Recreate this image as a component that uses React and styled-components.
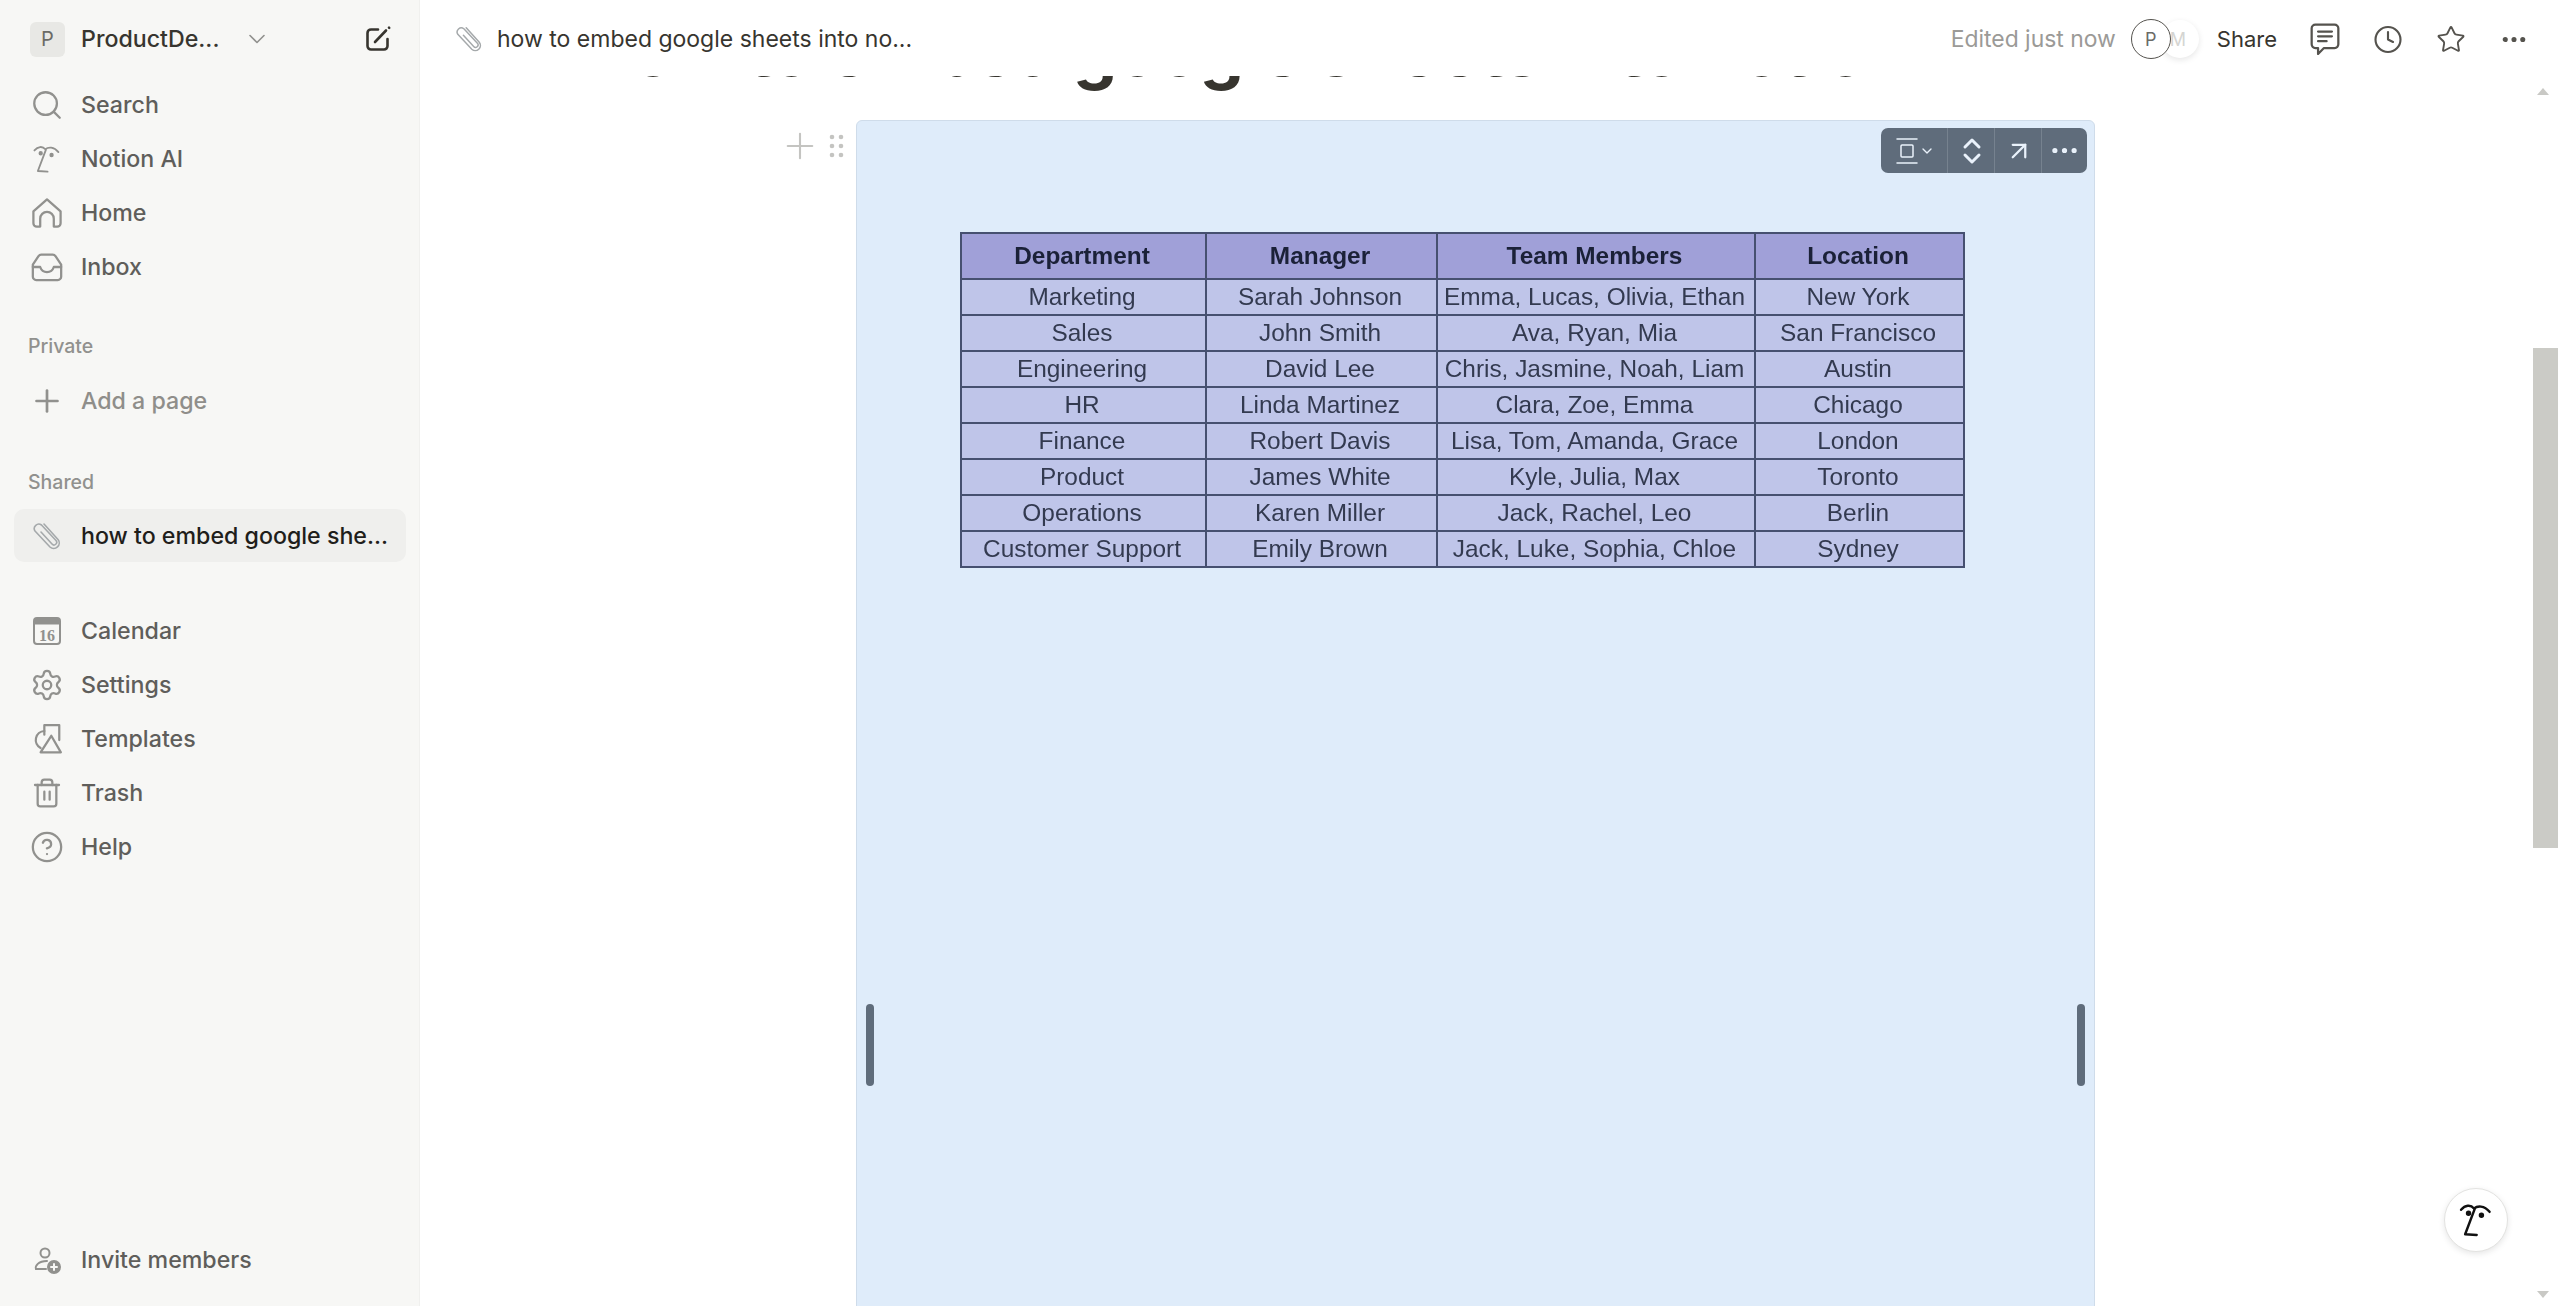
import React from 'react';
import styled, { createGlobalStyle } from 'styled-components';
import { Search, Settings, Trash2, CircleHelp, Plus, ChevronDown, Clock, Star, MoreHorizontal, ArrowUpRight } from 'lucide-react';

const GlobalStyle = createGlobalStyle`
  html, body { margin: 0; padding: 0; background: #fff; }
  body { font-family: Inter, "Noto Sans", sans-serif; overflow: hidden; }
`;

const Shell = styled.div`
  display: flex;
  width: 2561px;
  height: 1306px;
  overflow: hidden;
`;

const Sidebar = styled.aside`
  width: 420px;
  flex: none;
  display: flex;
  flex-direction: column;
  background: #f7f7f5;
  box-shadow: inset -1px 0 0 #f0f0ee;
`;

const Workspace = styled.div`
  height: 78px;
  display: flex;
  align-items: center;
  padding: 0 28px 0 30px;
  color: #37352f;
`;

const WorkspaceAvatar = styled.div`
  width: 35px;
  height: 35px;
  border-radius: 6px;
  background: #e8e8e5;
  color: #6b6b67;
  font-size: 20px;
  display: flex;
  align-items: center;
  justify-content: center;
`;

const WorkspaceName = styled.span`
  margin-left: 16px;
  font-size: 23.2px;
  font-weight: 500;
  color: #37352f;
`;

const WorkspaceChevron = styled(ChevronDown)`
  margin-left: 24px;
  color: #91918e;
`;

const ComposeSlot = styled.span`
  margin-left: auto;
  display: flex;
`;

const NavRow = styled.div`
  height: ${({ $selected }) => ($selected ? '53px' : '54px')};
  display: flex;
  align-items: center;
  margin-left: ${({ $selected }) => ($selected ? '14px' : '0')};
  width: ${({ $selected }) => ($selected ? '392px' : 'auto')};
  padding-left: ${({ $selected }) => ($selected ? '15px' : '29px')};
  border-radius: 10px;
  background: ${({ $selected }) => ($selected ? '#efefed' : 'transparent')};
  color: ${({ $selected, $muted }) => ($selected ? '#1f1e1b' : $muted ? '#8f8e8a' : '#5f5e5b')};
  font-size: 23.2px;
  font-weight: 500;
  box-sizing: border-box;
  white-space: nowrap;
`;

const NavIcon = styled.span`
  width: 36px;
  height: 36px;
  flex: none;
  margin-right: 16px;
  display: flex;
  align-items: center;
  justify-content: center;
  color: #91918e;
`;

const SectionLabel = styled.div`
  height: ${({ $h = 54 }) => $h}px;
  margin-top: ${({ $top }) => $top}px;
  padding-left: 28px;
  display: flex;
  align-items: center;
  font-size: 19.5px;
  font-weight: 500;
  color: #91918e;
`;

const NavGroup = styled.div`
  margin-top: ${({ $top = 0 }) => $top}px;
`;

const SidebarFooter = styled.div`
  margin-top: auto;
  padding-bottom: 19px;
`;

const Main = styled.main`
  flex: 1;
  min-width: 0;
  display: flex;
  flex-direction: column;
`;

const TopBar = styled.header`
  height: 76px;
  flex: none;
  box-sizing: border-box;
  display: flex;
  align-items: center;
  padding: 2px 32px 0 35px;
  background: #fff;
`;

const Breadcrumb = styled.div`
  display: flex;
  align-items: center;
  gap: 14px;
  font-size: 23px;
  color: #37352f;
  white-space: nowrap;
`;

const TopActions = styled.div`
  margin-left: auto;
  display: flex;
  align-items: center;
`;

const Edited = styled.span`
  font-size: 22.9px;
  color: #9b9a97;
  margin-right: 15px;
`;

const Avatar = styled.div`
  border-radius: 50%;
  background: #fff;
  display: flex;
  align-items: center;
  justify-content: center;
  box-sizing: border-box;
`;

const OwnerAvatar = styled(Avatar)`
  width: 40px;
  height: 40px;
  border: 1px solid #55534e;
  color: #6b6b67;
  font-size: 18px;
  position: relative;
  z-index: 1;
`;

const GuestAvatar = styled(Avatar)`
  width: 38px;
  height: 38px;
  margin-left: -10px;
  color: #d5d5d2;
  font-size: 18px;
  justify-content: flex-start;
  padding-left: 9px;
  box-shadow: 0 2px 6px rgba(0, 0, 0, 0.1);
`;

const ShareLabel = styled.span`
  margin-left: 18px;
  margin-right: 33px;
  font-size: 22px;
  color: #37352f;
`;

const TopIcons = styled.div`
  display: flex;
  align-items: center;
  gap: 33px;
  color: #55534e;
`;

const TopIconBox = styled.span`
  width: 30px;
  height: 30px;
  display: flex;
  align-items: center;
  justify-content: center;
`;

const Body = styled.div`
  flex: 1;
  min-height: 0;
  display: flex;
`;

const Page = styled.div`
  flex: 1;
  min-width: 0;
  overflow: hidden;
`;

const TitleClip = styled.div`
  height: 44px;
  overflow: hidden;
`;

const PageTitle = styled.h1`
  margin: -67px 0 0 169px;
  font-size: 70px;
  line-height: 84px;
  font-weight: 700;
  letter-spacing: -1.1px;
  color: #37352f;
  white-space: nowrap;
`;

const BlockRow = styled.div`
  display: flex;
  align-items: flex-start;
  padding-left: 357px;
`;

const BlockHandle = styled.div`
  width: 79px;
  height: 47px;
  flex: none;
  box-sizing: border-box;
  padding: 5px 0 0 2px;
  display: flex;
  align-items: center;
  gap: 8px;
  color: #c4c4c1;
`;

const EmbedFrame = styled.div`
  position: relative;
  width: 1239px;
  height: 1190px;
  flex: none;
  box-sizing: border-box;
  padding: 111px 0 0 103px;
  background: #dfecfa;
  border: 1px solid #cfdcea;
  border-radius: 6px 6px 0 0;
`;

const EmbedToolbar = styled.div`
  position: absolute;
  top: 7px;
  right: 7px;
  height: 45px;
  display: flex;
  align-items: stretch;
  border-radius: 7px;
  background: #5f6c7b;
  color: #eaf2fb;
  overflow: hidden;
`;

const ToolbarCell = styled.div`
  width: ${({ $w }) => $w}px;
  display: flex;
  align-items: center;
  justify-content: center;
  box-shadow: ${({ $last }) => ($last ? 'none' : 'inset -1px 0 0 #76828f')};
`;

const ResizeHandle = styled.div`
  position: absolute;
  top: 883px;
  ${({ $side }) => $side}: 9px;
  width: 8px;
  height: 82px;
  border-radius: 4px;
  background: #5f6c7b;
`;

const SheetTable = styled.table`
  width: 1003px;
  table-layout: fixed;
  border-collapse: collapse;
  font-family: "Liberation Sans", Arial, sans-serif;
  font-size: 24.4px;
  color: #333a50;
  text-align: center;
  filter: blur(0.5px);

  th, td {
    border: 2px solid #465070;
    padding: 0 3px 0 0;
    white-space: nowrap;
  }

  th {
    height: 44px;
    background: #a0a0d8;
    color: #1b2138;
    font-weight: 700;
  }

  td {
    height: 34px;
    background: #bfc5e9;
  }
`;

const ScrollRail = styled.div`
  width: 28px;
  flex: none;
  display: flex;
  flex-direction: column;
  align-items: flex-start;
  position: relative;
`;

const ScrollThumb = styled.div`
  width: 25px;
  height: 500px;
  margin-top: 272px;
  background: #cbcbc6;
`;

const ScrollArrow = styled.div`
  position: absolute;
  left: 4px;
  ${({ $up }) => ($up ? 'top: 12px;' : 'bottom: 8px;')}
  border-left: 6.5px solid transparent;
  border-right: 6.5px solid transparent;
  ${({ $up }) => ($up ? 'border-bottom' : 'border-top')}: 7px solid #c9c9c5;
`;

const AiButton = styled.div`
  position: absolute;
  left: 2444px;
  top: 1188px;
  width: 64px;
  height: 64px;
  box-sizing: border-box;
  border-radius: 50%;
  background: #fff;
  border: 1px solid #e3e3e1;
  box-shadow: 0 2px 6px rgba(0, 0, 0, 0.1);
  display: flex;
  align-items: center;
  justify-content: center;
  color: #111;
`;

const StrokeIcon = styled.svg`
  fill: none;
  stroke: currentColor;
  stroke-width: ${({ $weight = 2 }) => $weight};
  stroke-linecap: round;
  stroke-linejoin: round;
  flex: none;
`;

const IconNumber = styled.text`
  font-family: "Liberation Serif", serif;
  font-size: 16px;
  font-weight: 700;
  fill: currentColor;
  stroke: none;
  text-anchor: middle;
`;

const ComposeIcon = () => (
  <StrokeIcon width="28" height="28" viewBox="0 0 28 28" $weight={2.6}>
    <path d="M14 4.5H7a3.5 3.5 0 0 0-3.5 3.5v13A3.5 3.5 0 0 0 7 24.5h13a3.5 3.5 0 0 0 3.5-3.5v-7" />
    <path d="M11 17l11-11.5" />
    <path d="M25 2.6l.2.2" />
  </StrokeIcon>
);

const FaceIcon = ({ size = 32, weight = 1.6 }) => (
  <StrokeIcon width={size} height={size} viewBox="0 0 28 28" $weight={weight}>
    <path d="M3 6.5C6 3 10 2.5 12.5 5.5C15 3.5 20 3 24 8" />
    <path d="M13 6L6 24.5L14.5 25" />
    <circle cx="8.5" cy="9" r="1.1" fill="currentColor" />
    <circle cx="18" cy="10.5" r="1.1" fill="currentColor" />
  </StrokeIcon>
);

const HomeIcon = () => (
  <StrokeIcon width="34" height="34" viewBox="0 0 30 30" $weight={2}>
    <path d="M3 13.5L15 3l12 10.5V24a3 3 0 0 1-3 3h-3v-7a6 6 0 0 0-12 0v7H6a3 3 0 0 1-3-3z" />
  </StrokeIcon>
);

const InboxIcon = () => (
  <StrokeIcon width="34" height="34" viewBox="0 0 30 30" $weight={2}>
    <path d="M2.5 13L7.5 5.5A3 3 0 0 1 10 4h10a3 3 0 0 1 2.5 1.5L27.5 13v10.5a3 3 0 0 1-3 3h-19a3 3 0 0 1-3-3z" />
    <path d="M2.5 15H9c1 3 3 4.5 6 4.5s5-1.5 6-4.5h6.5" />
  </StrokeIcon>
);

const CalendarIcon = () => (
  <StrokeIcon width="30" height="30" viewBox="0 0 30 30" $weight={2}>
    <rect x="2" y="2" width="26" height="26" rx="3" />
    <path d="M2 5.5h26" strokeWidth="6" strokeLinecap="butt" />
    <IconNumber x="15" y="25">16</IconNumber>
  </StrokeIcon>
);

const TemplatesIcon = () => (
  <StrokeIcon width="32" height="32" viewBox="0 0 30 30" $weight={2.1}>
    <path d="M9 23.5A8.5 8.5 0 0 1 12.5 7.5" />
    <path d="M12.5 11V2h14v14" />
    <path d="M19 12L28 27.5H9z" />
  </StrokeIcon>
);

const PaperclipIcon = ({ size = 30 }) => (
  <StrokeIcon width={size} height={size} viewBox="0 0 30 30" $weight={1.6}>
    <path d="M9 11L20 23a2.5 2.5 0 0 0 4-3.5L9.5 4a4.5 4.5 0 0 0-6.5 6L18 26a5.5 5.5 0 0 0 8-7.5L12 3" stroke="#a5a9ab" />
  </StrokeIcon>
);

const InviteIcon = () => (
  <StrokeIcon width="30" height="30" viewBox="0 0 30 30" $weight={2}>
    <circle cx="13" cy="8" r="4.5" />
    <path d="M4 24c-1-3 2-8 11-8" />
    <path d="M4 24h10" />
    <circle cx="22" cy="22" r="6" fill="currentColor" />
    <path d="M22 19v6M19 22h6" stroke="#f7f7f5" />
  </StrokeIcon>
);

const CommentIcon = () => (
  <StrokeIcon width="30" height="32" viewBox="1 1 28 30" $weight={2.1}>
    <path d="M6 2.5h18A3.5 3.5 0 0 1 27.5 6v15a3.5 3.5 0 0 1-3.5 3.5H14L8.5 30v-5.5H6A3.5 3.5 0 0 1 2.5 21V6A3.5 3.5 0 0 1 6 2.5z" />
    <path d="M8.5 9h13M8.5 13.5h13M8.5 18h8" />
  </StrokeIcon>
);

const GripIcon = () => (
  <StrokeIcon width="15" height="24" viewBox="0 0 15 24" $weight={0}>
    {[3, 12, 21].map((y) => (
      <React.Fragment key={y}>
        <circle cx="3" cy={y} r="2.3" fill="currentColor" />
        <circle cx="12" cy={y} r="2.3" fill="currentColor" />
      </React.Fragment>
    ))}
  </StrokeIcon>
);

const AlignIcon = () => (
  <StrokeIcon width="24" height="28" viewBox="0 0 24 28" $weight={1.5}>
    <path d="M2 2h20M2 26h20" />
    <rect x="6" y="8" width="12" height="12" rx="1" />
  </StrokeIcon>
);

const ResizeIcon = () => (
  <StrokeIcon width="22" height="30" viewBox="0 0 22 30" $weight={3}>
    <path d="M4 11l7-7 7 7M4 19l7 7 7-7" />
  </StrokeIcon>
);

const topNav = [
  { label: 'Search', icon: <Search size={34} strokeWidth={1.6} /> },
  { label: 'Notion AI', icon: <FaceIcon /> },
  { label: 'Home', icon: <HomeIcon /> },
  { label: 'Inbox', icon: <InboxIcon /> },
];

const bottomNav = [
  { label: 'Calendar', icon: <CalendarIcon /> },
  { label: 'Settings', icon: <Settings size={34} strokeWidth={1.6} /> },
  { label: 'Templates', icon: <TemplatesIcon /> },
  { label: 'Trash', icon: <Trash2 size={32} strokeWidth={1.7} /> },
  { label: 'Help', icon: <CircleHelp size={34} strokeWidth={1.6} /> },
];

const columns = [245, 231, 318, 209];
const headers = ['Department', 'Manager', 'Team Members', 'Location'];
const rows = [
  ['Marketing', 'Sarah Johnson', 'Emma, Lucas, Olivia, Ethan', 'New York'],
  ['Sales', 'John Smith', 'Ava, Ryan, Mia', 'San Francisco'],
  ['Engineering', 'David Lee', 'Chris, Jasmine, Noah, Liam', 'Austin'],
  ['HR', 'Linda Martinez', 'Clara, Zoe, Emma', 'Chicago'],
  ['Finance', 'Robert Davis', 'Lisa, Tom, Amanda, Grace', 'London'],
  ['Product', 'James White', 'Kyle, Julia, Max', 'Toronto'],
  ['Operations', 'Karen Miller', 'Jack, Rachel, Leo', 'Berlin'],
  ['Customer Support', 'Emily Brown', 'Jack, Luke, Sophia, Chloe', 'Sydney'],
];

const NavItem = ({ icon, label, ...rest }) => (
  <NavRow {...rest}>
    <NavIcon>{icon}</NavIcon>
    {label}
  </NavRow>
);

export default function App() {
  return (
    <Shell>
      <GlobalStyle />
      <Sidebar>
        <Workspace>
          <WorkspaceAvatar>P</WorkspaceAvatar>
          <WorkspaceName>ProductDe...</WorkspaceName>
          <WorkspaceChevron size={28} strokeWidth={1.4} />
          <ComposeSlot><ComposeIcon /></ComposeSlot>
        </Workspace>
        <NavGroup>
          {topNav.map((item) => <NavItem key={item.label} {...item} />)}
        </NavGroup>
        <SectionLabel $top={24} $h={56}>Private</SectionLabel>
        <NavItem icon={<Plus size={36} strokeWidth={1.8} />} label="Add a page" $muted />
        <SectionLabel $top={27}>Shared</SectionLabel>
        <NavItem icon={<PaperclipIcon />} label="how to embed google she..." $selected />
        <NavGroup $top={42}>
          {bottomNav.map((item) => <NavItem key={item.label} {...item} />)}
        </NavGroup>
        <SidebarFooter>
          <NavItem icon={<InviteIcon />} label="Invite members" />
        </SidebarFooter>
      </Sidebar>

      <Main>
        <TopBar>
          <Breadcrumb>
            <PaperclipIcon size={28} />
            how to embed google sheets into no...
          </Breadcrumb>
          <TopActions>
            <Edited>Edited just now</Edited>
            <OwnerAvatar>P</OwnerAvatar>
            <GuestAvatar>M</GuestAvatar>
            <ShareLabel>Share</ShareLabel>
            <TopIcons>
              <TopIconBox><CommentIcon /></TopIconBox>
              <TopIconBox><Clock size={33} strokeWidth={1.7} /></TopIconBox>
              <TopIconBox><Star size={37} strokeWidth={1.5} /></TopIconBox>
              <TopIconBox><MoreHorizontal size={41} strokeWidth={2.1} /></TopIconBox>
            </TopIcons>
          </TopActions>
        </TopBar>
        <Body>
          <Page>
            <TitleClip>
              <PageTitle>how to embed google sheets into notion</PageTitle>
            </TitleClip>
            <BlockRow>
              <BlockHandle>
                <Plus size={42} strokeWidth={1.2} />
                <GripIcon />
              </BlockHandle>
              <EmbedFrame>
                <EmbedToolbar>
                  <ToolbarCell $w={67}>
                    <AlignIcon />
                    <ChevronDown size={16} strokeWidth={2} />
                  </ToolbarCell>
                  <ToolbarCell $w={47}><ResizeIcon /></ToolbarCell>
                  <ToolbarCell $w={47}><ArrowUpRight size={30} strokeWidth={1.8} /></ToolbarCell>
                  <ToolbarCell $w={45} $last><MoreHorizontal size={33} strokeWidth={1.8} /></ToolbarCell>
                </EmbedToolbar>
                <SheetTable>
                  <colgroup>
                    {columns.map((w) => <col key={w} width={w} />)}
                  </colgroup>
                  <thead>
                    <tr>{headers.map((h) => <th key={h}>{h}</th>)}</tr>
                  </thead>
                  <tbody>
                    {rows.map((row) => (
                      <tr key={row[0]}>
                        {row.map((cell) => <td key={cell}>{cell}</td>)}
                      </tr>
                    ))}
                  </tbody>
                </SheetTable>
                <ResizeHandle $side="left" />
                <ResizeHandle $side="right" />
              </EmbedFrame>
            </BlockRow>
          </Page>
          <ScrollRail>
            <ScrollArrow $up />
            <ScrollThumb />
            <ScrollArrow />
          </ScrollRail>
        </Body>
      </Main>
      <AiButton><FaceIcon size={38} weight={1.8} /></AiButton>
    </Shell>
  );
}
